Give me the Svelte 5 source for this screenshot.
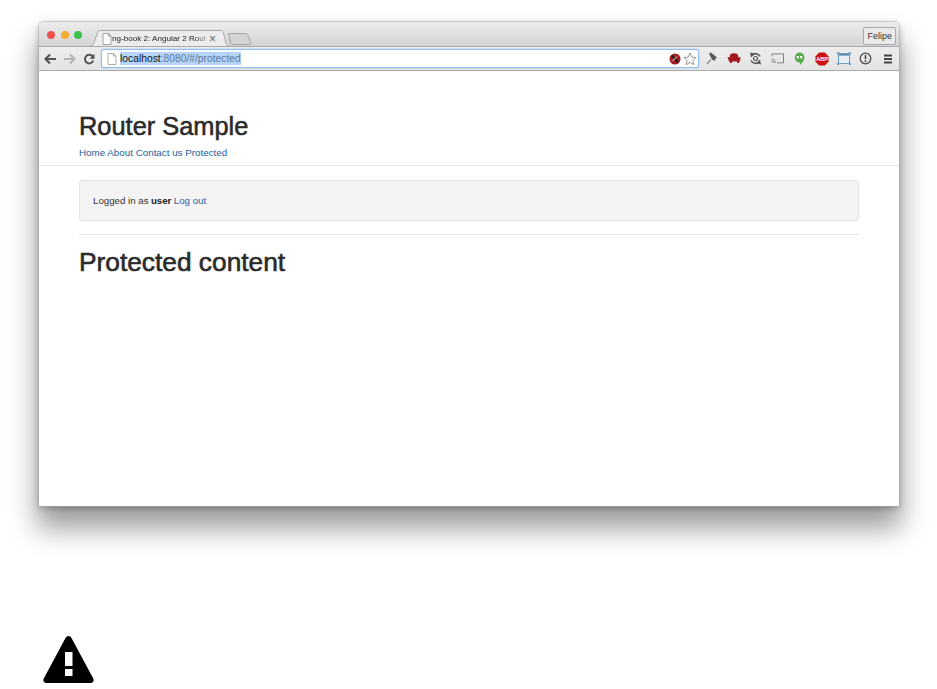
<script>
  const links = ['Home', 'About', 'Contact us', 'Protected'];
</script>

<div class="page">
  <div class="window">
    <div class="tabstrip">
      <div class="lights">
        <span class="light red"></span>
        <span class="light yellow"></span>
        <span class="light green"></span>
      </div>
      <div class="tab">
        <svg class="tabshape" width="140" height="16" viewBox="0 0 140 16">
          <path d="M0 16c2 0 3-.6 4-3L7.500 2.500C8 1 9 .5 10.500 .5h120c1.500 0 2.200.5 2.800 2l2.700 10.500c.6 2.200 2 3 4 3" fill="#ececec" stroke="#a8a8a8"/>
        </svg>
        <svg class="tabdoc" width="10" height="12" viewBox="0 0 10 12">
          <path d="M1 .5h5.500L9 3v8.500H1z M6.500.5V3H9" fill="#fff" stroke="#8a8a8a" stroke-width=".8"/>
        </svg>
        <span class="tabtitle">ng-book 2: Angular 2 Rout</span>
        <span class="tabclose">×</span>
      </div>
      <svg class="newtab" width="24" height="12" viewBox="0 0 24 12">
        <path d="M.5 .5h17c1.500 0 2 .5 2.500 2l3 7.500c.3 1.200-.2 1.500-1.500 1.500H5c-1.500 0-2-.5-2.500-2z" fill="#d4d4d4" stroke="#a6a6a6"/>
      </svg>
      <div class="user">Felipe</div>
    </div>

    <div class="toolbar">
      <svg width="13" height="12" viewBox="0 0 13 12"><path d="M6 1.500 1.500 6 6 10.500M2 6h10" fill="none" stroke="#555" stroke-width="2.200"/></svg>
      <svg width="13" height="12" viewBox="0 0 13 12"><path d="M7 1.500 11.500 6 7 10.500M11 6H1" fill="none" stroke="#b4b4b4" stroke-width="2.200"/></svg>
      <svg width="12" height="12" viewBox="0 0 12 12"><path d="M10 4A4.300 4.300 0 1 0 10.300 7.500" fill="none" stroke="#555" stroke-width="2"/><path d="M11.500 .8v5h-5z" fill="#555"/></svg>

      <div class="omnibox">
        <svg width="10" height="12" viewBox="0 0 10 12">
          <path d="M1 .5h5.500L9 3v8.500H1z M6.500.5V3H9" fill="#fff" stroke="#9a9a9a" stroke-width=".8"/>
        </svg>
        <span class="url"><span class="host">localhost</span>:8080/#/protected</span>
        <svg class="blocked" width="12" height="12" viewBox="0 0 12 12">
          <circle cx="6" cy="6" r="5.500" fill="#a51d22"/>
          <path d="M2.500 2.500 9.500 9.500" stroke="#222" stroke-width="2"/>
          <path d="M8 3.500 3.500 8" stroke="#eee" stroke-width="1"/>
        </svg>
        <svg class="star" width="14" height="14" viewBox="0 0 14 14">
          <path d="M7 1l1.800 4.100 4.400.4-3.300 2.900 1 4.300L7 10.500l-3.900 2.200 1-4.300L.8 5.500l4.400-.4z" fill="#fff" stroke="#8c8c8c" stroke-width=".9"/>
        </svg>
      </div>

      <div class="extensions">
        <svg width="14" height="13" viewBox="0 0 14 13"><path d="M4 1.500 6 .5l6 5-1.500 1-.5 2.500-3-1.500z" fill="#5a5a5a"/><path d="M6 7.500 2 12" stroke="#888" stroke-width="1.200"/></svg>
        <svg width="14" height="11" viewBox="0 0 14 11"><path d="M3.500 1c2-1 5-1 7 0l1 3.500 2-.5-.5 4.500h-1V10h-2V8.500h-5V10h-2V8.500h-1L.5 4l2 .5z" fill="#a3191c"/></svg>
        <svg width="13" height="13" viewBox="0 0 13 13"><path d="M2.600 3.500A5 5 0 0 1 11 4.500M10.400 9.500A5 5 0 0 1 2 8.500" fill="none" stroke="#555" stroke-width="1.600"/><path d="M1 .5 5.500 2 2 5.500zM12 12.500 7.500 11 11 7.500z" fill="#555"/><circle cx="6.500" cy="6.500" r="2" fill="none" stroke="#555" stroke-width="1.200"/></svg>
        <svg width="13" height="11" viewBox="0 0 13 11"><path d="M1 3.500V.9h11.500v9H6" fill="none" stroke="#777" stroke-width=".9"/><path d="M.5 6a4 4 0 0 1 4 4M.5 8a2 2 0 0 1 2 2" fill="none" stroke="#777" stroke-width=".9"/></svg>
        <svg width="11" height="14" viewBox="0 0 11 14"><path d="M5.500.5a5 5 0 0 1 5 5c0 3-2.500 5-4.500 7.500V10.500a5 5 0 0 1-.5-10z" fill="#54a94b"/><path d="M2.700 4h2.200v2.200L3.800 7.500V6H2.700zM6.100 4h2.200v2.200L7.200 7.500V6H6.100z" fill="#fff"/></svg>
        <svg width="14" height="14" viewBox="0 0 14 14"><path d="M4.200.5h5.600l3.700 3.700v5.600l-3.700 3.700H4.200L.5 9.800V4.200z" fill="#cc1111"/><text class="abp" x="7" y="9.300" text-anchor="middle">ABP</text></svg>
        <svg width="14" height="13" viewBox="0 0 14 13"><rect x="1.500" y="1.500" width="11" height="10" fill="#e8eef3" stroke="#6d9cc0"/><path d="M1.500 2.800h11" stroke="#4a7fa8" stroke-width="1.500"/><path d="M0 0h2.500v2.500H0zM11.500 0H14v2.500h-2.500zM0 10.500h2.500V13H0zM11.500 10.500H14V13h-2.500z" fill="#7aa9cc"/></svg>
        <svg width="13" height="13" viewBox="0 0 13 13"><circle cx="6.500" cy="6.500" r="5.300" fill="none" stroke="#444" stroke-width="1.200"/><path d="M6.500 3v4.200" stroke="#444" stroke-width="1.600"/><path d="M6.500 8.300v1.700" stroke="#444" stroke-width="1.600"/></svg>
        <svg width="10" height="10" viewBox="0 0 10 10"><path d="M1 1.500h8M1 5h8M1 8.500h8" stroke="#444" stroke-width="1.800"/></svg>
      </div>
    </div>

    <div class="content">
      <header class="siteheader">
        <h1>Router Sample</h1>
        <nav>
          {#each links as link}
            <a href="#top">{link}</a>{' '}
          {/each}
        </nav>
      </header>
      <div class="container">
        <div class="well">Logged in as <strong>user</strong> <a href="#top">Log out</a></div>
        <hr />
        <h2>Protected content</h2>
      </div>
    </div>
  </div>

  <svg class="warning" width="51" height="47" viewBox="0 0 51 47">
    <path d="M25.500 0c1.300 0 2.300.8 3 2.100l21.600 40.100c1.300 2.500.2 4.800-2.700 4.800H3.600C.7 47-.4 44.700.9 42.200L22.500 2.100C23.200.8 24.200 0 25.500 0z" fill="#000"/>
    <rect x="22" y="16" width="7.500" height="14" fill="#fff"/>
    <rect x="22" y="33" width="7.500" height="7" fill="#fff"/>
  </svg>
</div>

<style>
  :global(body) {
    margin: 0;
    background: #fff;
  }

  .page {
    width: 937px;
    height: 689px;
    overflow: hidden;
    box-sizing: border-box;
    padding: 22px 38px 0 39px;
    font-family: "Liberation Sans", Arial, sans-serif;
    color: #2b2b2b;
  }

  .window {
    height: 484px;
    background: #fff;
    border-radius: 4px 4px 0 0;
    box-shadow: 0 0 0 .5px #a8a8a8, 0 20px 28px 2px rgba(0, 0, 0, .4), 0 2px 6px rgba(0, 0, 0, .25);
    display: flex;
    flex-direction: column;
  }

  .tabstrip {
    height: 24px;
    display: flex;
    align-items: flex-end;
    background: linear-gradient(#ececec, #d4d4d4);
    border-radius: 4px 4px 0 0;
    padding: 0 3px 0 8px;
  }

  .lights {
    display: flex;
    gap: 5.500px;
    align-self: flex-start;
    margin: 9px 8px 0 0;
  }

  .light {
    width: 8px;
    height: 8px;
    border-radius: 50%;
  }

  .red { background: #f2524f; }
  .yellow { background: #f5ac37; }
  .green { background: #3cc04a; }

  .tab {
    position: relative;
    width: 140px;
    height: 16px;
    flex: none;
    display: flex;
    align-items: center;
    padding: 1px 0 0 12px;
    box-sizing: border-box;
    font-size: 8.100px;
    color: #222;
    white-space: nowrap;
  }

  .tabshape {
    position: absolute;
    left: 0;
    top: 0;
  }

  .tabdoc, .tabtitle, .tabclose {
    position: relative;
  }

  .tabtitle {
    mask-image: linear-gradient(90deg, #000 88%, rgba(0, 0, 0, .35));
  }

  .tabclose {
    margin-left: 3px;
    color: #666;
    font-size: 12px;
    line-height: 10px;
  }

  .newtab {
    margin: 0 0 1px -2px;
    flex: none;
  }

  .user {
    margin-left: auto;
    align-self: flex-start;
    margin-top: 5px;
    height: 16px;
    line-height: 16px;
    padding: 0 3px;
    font-size: 9px;
    color: #333;
    border: 1px solid #a9a9a9;
    border-radius: 2px;
    background: #eaeaea;
  }

  .toolbar {
    height: 25px;
    box-sizing: border-box;
    display: flex;
    align-items: center;
    gap: 6.500px;
    padding-left: 4.500px;
    background: linear-gradient(#ededed, #e4e4e4);
    border-top: 1px solid #a8a8a8;
    border-bottom: 1px solid #a9a9a9;
  }

  .toolbar > svg {
    flex: none;
  }

  .omnibox {
    width: 598px;
    height: 19px;
    flex: none;
    box-sizing: border-box;
    background: #fff;
    border: 1px solid #93bdea;
    box-shadow: 0 0 0 .5px #bcd6f2;
    border-radius: 2px;
    display: flex;
    align-items: center;
    padding: 0 1px 0 5px;
  }

  .url {
    margin-left: 3px;
    font-size: 10.300px;
    background: #b5d5fb;
    color: #5f7a96;
    line-height: 13px;
    flex: none;
  }

  .host {
    color: #111;
  }

  .blocked {
    margin-left: auto;
  }

  .star {
    margin-left: 2px;
  }

  .extensions {
    display: grid;
    grid-auto-flow: column;
    grid-auto-columns: 22px;
    justify-items: center;
    align-items: center;
    flex: none;
    margin-left: -5px;
  }

  .abp {
    font-size: 5.500px;
    font-weight: bold;
    fill: #fff;
  }

  .content {
    flex: 1;
  }

  .siteheader {
    padding: 41px 40px 5px;
    border-bottom: 1px solid #e6e6e6;
  }

  h1 {
    margin: 0;
    font-size: 25.400px;
    line-height: 28px;
    font-weight: 500;
    color: #2b2b2b;
    -webkit-text-stroke: .55px #2b2b2b;
  }

  nav {
    margin-top: 6px;
    font-size: 9.800px;
    line-height: 14px;
  }

  a {
    color: #215f9c;
    text-decoration: none;
  }

  .container {
    padding: 14px 40px 0;
  }

  .well {
    height: 41px;
    box-sizing: border-box;
    padding: 0 13px;
    display: flex;
    align-items: center;
    gap: .25em;
    font-size: 9.700px;
    color: #333;
    background: #f4f4f4;
    border: 1px solid #e3e3e3;
    border-radius: 3px;
  }

  strong {
    color: #222;
  }

  hr {
    margin: 13px 0 0;
    border: 0;
    border-top: 1px solid #e6e6e6;
  }

  h2 {
    margin: 13px 0 0;
    font-size: 26.300px;
    line-height: 28px;
    font-weight: 500;
    color: #2b2b2b;
    -webkit-text-stroke: .6px #2b2b2b;
  }

  .warning {
    display: block;
    margin: 130px 0 0 4px;
  }
</style>
